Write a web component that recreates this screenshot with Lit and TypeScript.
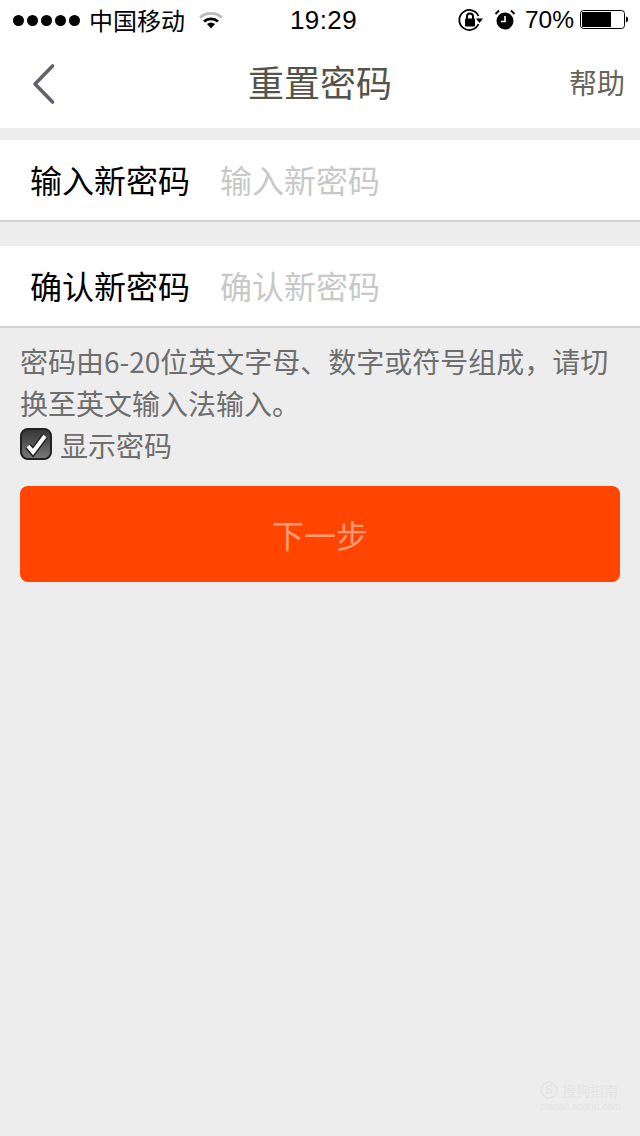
import { LitElement, html, css } from "lit";
import { customElement } from "lit/decorators.js";

@customElement("app-root")
export class AppRoot extends LitElement {
  static styles = css`
    :host {
      display: flex;
      flex-direction: column;
      position: relative;
      width: 640px;
      height: 1136px;
      overflow: hidden;
      background: #ededed;
      font-family: "Noto Sans CJK SC", "Liberation Sans", sans-serif;
    }
    .head { background: #fff; height: 128px; display: flex; flex-direction: column; }
    .status { height: 40px; display: flex; align-items: center; color: #000; font-size: 24px; padding-left: 13px; box-sizing: border-box; position: relative; }
    .dots { display: flex; gap: 3px; }
    .dots i { width: 11px; height: 11px; border-radius: 50%; background: #000; display: block; }
    .carrier { margin-left: 9px; line-height: 38px; }
    .wifi { margin-left: 14px; display: block; }
    .time { position: absolute; left: 0; right: 0; top: 0; padding-left: 7px; text-align: center; font: 26px/41px "Liberation Sans", sans-serif; letter-spacing: .4px; }
    .right { margin-left: auto; display: flex; align-items: center; padding-right: 12px; }
    .alarm { margin-left: 10px; }
    .pct { font: 24.5px/40px "Liberation Sans", sans-serif; margin-left: 9px; }
    .batt { margin-left: 6px; }
    .nav { flex: 1; display: flex; align-items: center; position: relative; padding: 0 15px 0 32px; }
    .back { display: block; }
    .title { position: absolute; left: 0; right: 0; text-align: center; font-size: 36px; line-height: 82px; top: 0; color: #55544a; }
    .help { margin-left: auto; font-size: 28px; padding-bottom: 4px; color: #66645a; }
    .row { background: #fff; height: 82px; box-sizing: border-box; border-bottom: 2px solid #d3d3d3; display: flex; align-items: center; padding: 0 0 2px 30px; font-size: 32px; color: #000; }
    .row.first { margin-top: 12px; }
    .row.second { margin-top: 24px; }
    .row .ph { margin-left: 30px; color: #c8c8c8; }
    .note { margin: 12px 20px 0; font-size: 28px; line-height: 42px; color: #6e6e6e; }
    .show { display: flex; align-items: center; margin: 0 20px; height: 39px; font-size: 28px; color: #6e6e6e; gap: 8px; }
    .show span { padding-top: 3px; }
    .check { display: block; flex: none; }
    .btn { margin: 23px 20px 0; height: 96px; border-radius: 8px; background: #ff4500; color: #ff9d78; font-size: 32px; display: flex; align-items: center; justify-content: center; }
    .mark { position: absolute; left: 540px; top: 1079px; color: #e4e4e4; display: flex; flex-direction: column; width: 82px; }
    .mark .t { display: flex; align-items: center; gap: 4px; font-size: 14px; line-height: 22px; }
    .mark .s { width: 18px; height: 18px; border: 2px solid #e4e4e4; border-radius: 50%; box-sizing: border-box; font: bold 12px/14px "Liberation Sans", sans-serif; text-align: center; flex: none; }
    .mark .u { font: 10px/12px "Liberation Sans", sans-serif; }
  `;

  render() {
    return html`
      <div class="head">
        <div class="status">
          <div class="dots"><i></i><i></i><i></i><i></i><i></i></div>
          <span class="carrier">中国移动</span>
          <svg class="wifi" width="24" height="18" viewBox="0 0 24 18">
            <path d="M1 6.500C7 1 17 1 23 6.500" fill="none" stroke="#bdbdbd" stroke-width="2.600"/>
            <path d="M5 10.500C9 7 15 7 19 10.500" fill="none" stroke="#000" stroke-width="2.800"/>
            <path d="M8 13C10.500 11 13.500 11 16 13L12 17.500Z" fill="#000"/>
          </svg>
          <div class="time">19:29</div>
          <div class="right">
            <svg width="26" height="24" viewBox="0 0 26 24">
              <path d="M20.500 8A10 10 0 1 0 20.500 16" fill="none" stroke="#000" stroke-width="1.800"/>
              <path d="M18 10.500h7l-3.500 4.500z" fill="#000"/>
              <rect x="7" y="10.500" width="10" height="8" rx="1" fill="#000"/>
              <path d="M9 11V8.500a3 3 0 0 1 6 0V11" fill="none" stroke="#000" stroke-width="2"/>
            </svg>
            <svg class="alarm" width="22" height="22" viewBox="0 0 22 22">
              <circle cx="11" cy="12" r="8.500" fill="#000"/>
              <path d="M11 7v5.500H7" fill="none" stroke="#fff" stroke-width="1.600"/>
              <path d="M1.500 5L5 1.500M20.500 5L17 1.500" stroke="#000" stroke-width="1.800" fill="none"/>
            </svg>
            <span class="pct">70%</span>
            <svg class="batt" width="48" height="20" viewBox="0 0 48 20">
              <rect x="0.500" y="0.500" width="44" height="18" rx="3" fill="#fff" stroke="#000"/>
              <rect x="2" y="2" width="29" height="15" fill="#000"/>
              <path d="M46 6.500c1.500.3 2 1.500 2 3s-.5 2.700-2 3z" fill="#000"/>
            </svg>
          </div>
        </div>
        <div class="nav">
          <svg class="back" width="24" height="42" viewBox="0 0 24 42">
            <path d="M20.500 3L3 21L20.500 39" fill="none" stroke="#62626c" stroke-width="3.600" stroke-linecap="round" stroke-linejoin="round"/>
          </svg>
          <div class="title">重置密码</div>
          <div class="help">帮助</div>
        </div>
      </div>
      <div class="row first"><span>输入新密码</span><span class="ph">输入新密码</span></div>
      <div class="row second"><span>确认新密码</span><span class="ph">确认新密码</span></div>
      <div class="note">密码由6-20位英文字母、数字或符号组成，请切换至英文输入法输入。</div>
      <div class="show">
        <svg class="check" width="32" height="32" viewBox="0 0 32 32">
          <defs><linearGradient id="g" x1="0" y1="0" x2="0" y2="1"><stop offset="0" stop-color="#333"/><stop offset="1" stop-color="#7a7a7a"/></linearGradient></defs>
          <rect x="1" y="1" width="30" height="30" rx="7" fill="url(#g)" stroke="#222" stroke-width="2"/>
          <path d="M8 18l5 6L25 8" fill="none" stroke="#222" stroke-width="7"/>
          <path d="M8 18l5 6L25 8" fill="none" stroke="#fff" stroke-width="4"/>
        </svg>
        <span>显示密码</span>
      </div>
      <div class="btn">下一步</div>
      <div class="mark">
        <div class="t"><span class="s">S</span><span>搜狗指南</span></div>
        <div class="u">zhinan.sogou.com</div>
      </div>
    `;
  }
}
